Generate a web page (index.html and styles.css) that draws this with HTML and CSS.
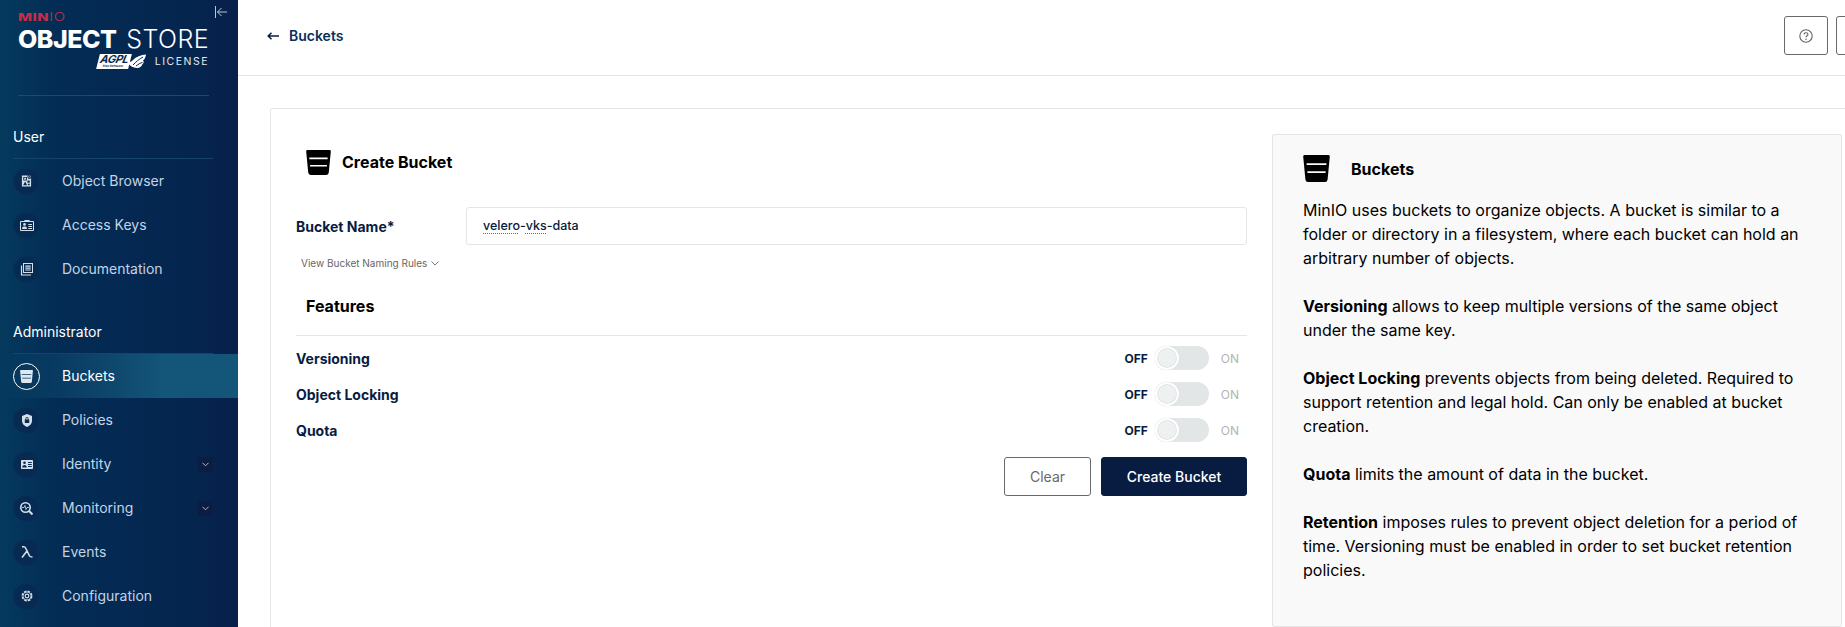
FILE: index.html
```html
<!DOCTYPE html>
<html lang="en">
<head>
<meta charset="utf-8">
<title>MinIO Console - Create Bucket</title>
<link rel="stylesheet" href="styles.css">
</head>
<body>
<svg class="defs" width="0" height="0" aria-hidden="true">
  <symbol id="bucket" viewBox="0 0 27 27">
    <path fill-rule="evenodd" d="M1.5 0H25.5Q27 0 26.8 1.6L24.6 24.4Q24.3 27 22 27H5Q2.7 27 2.4 24.4L.2 1.6Q0 0 1.5 0ZM3.6 8.2V9.9H23.4V8.2ZM4.4 16.2V17.9H22.6V16.2Z"/>
  </symbol>
</svg>
<div class="app">
  <aside class="sidebar">
    <button class="collapse" aria-label="Collapse">
      <svg viewBox="0 0 12 12" width="12" height="12"><path d="M.5 0V12M12 6H2.5M6.5 2L2.5 6L6.5 10" fill="none" stroke="#b9c6d4" stroke-width="1"/></svg>
    </button>
    <div class="logo">
      <div class="logo-brand">MIN<span class="logo-io">IO</span></div>
      <div class="logo-product"><b>OBJECT</b><span>STORE</span></div>
      <div class="logo-license">
        <div class="agpl">
          <span class="agpl-tag"><i>AGPL</i><small>Free Software</small></span>
          <svg class="agpl-wing" viewBox="0 0 19 16" width="19" height="16"><path d="M0 8C2 11 6 14 10 14C13 14 15 12 15.500 10C17 9 17 7.500 16 6.500C18 5 18.500 3 19 .5C14 1 9 2.500 6 6C4 8 2 8.500 0 8Z" fill="#fff"/><path d="M6 11C9 8 12 5 16 3M9 12C11 10.500 13 9 15.500 8.500" stroke="#0a2a4e" stroke-width="1" fill="none"/></svg>
        </div>
        <span class="logo-word">LICENSE</span>
      </div>
    </div>

    <nav class="nav">
      <h3 class="nav-title">User</h3>
      <a class="nav-item">
        <span class="nav-icon"><svg viewBox="0 0 12 12" width="11" height="12"><path fill-rule="evenodd" d="M1 0H7.500A2 2 0 0 0 11 2.800V12H1ZM2.500 1.500V5.500H6.500V1.500ZM3.500 2.500H5.500V4.500H3.500ZM7 5.500V8H9.500V5.500ZM4.500 6.500L2.300 10.500H6.700ZM7.500 9V10.500H9.500V9Z" fill="#d5dfea"/><circle cx="9.300" cy="1.300" r="1.100" fill="none" stroke="#d5dfea" stroke-width=".6"/></svg></span>
        <span class="nav-label">Object Browser</span>
      </a>
      <a class="nav-item">
        <span class="nav-icon"><svg viewBox="0 0 14 12" width="14" height="12"><path fill-rule="evenodd" d="M1 2H4.500V1H9.500V2H13Q14 2 14 3V11Q14 12 13 12H1Q0 12 0 11V3Q0 2 1 2ZM1 3V11H13V3ZM4.500 4A1.400 1.400 0 1 1 4.500 6.800A1.400 1.400 0 1 1 4.500 4ZM2 10C2 8 3 7.500 4.500 7.500S7 8 7 10ZM8.300 5H12V6H8.300ZM8.300 7H12V8H8.300ZM8.300 9H12V10H8.300Z" fill="#d5dfea"/></svg></span>
        <span class="nav-label">Access Keys</span>
      </a>
      <a class="nav-item">
        <span class="nav-icon"><svg viewBox="0 0 13 13" width="13" height="13"><path fill-rule="evenodd" d="M3 0H13V10H3ZM4 1V9H12V1ZM5.300 2.500H10.700V3.700H5.300ZM5.300 4.500H10.700V5.700H5.300ZM5.300 6.500H10.700V7.500H5.300Z" fill="#d5dfea"/><path d="M1.500 2.500V12H11" fill="none" stroke="#d5dfea" stroke-width="1.200"/></svg></span>
        <span class="nav-label">Documentation</span>
      </a>

      <h3 class="nav-title nav-title-admin">Administrator</h3>
      <a class="nav-item is-active">
        <span class="nav-icon"><svg class="fill-light" width="13" height="13"><use href="#bucket"/></svg></span>
        <span class="nav-label">Buckets</span>
      </a>
      <a class="nav-item">
        <span class="nav-icon"><svg viewBox="0 0 12 13" width="12" height="13"><path fill-rule="evenodd" d="M6 0L11 2V7C11 10 8.500 12 6 13C3.500 12 1 10 1 7V2ZM3.800 5.500V9H8.200V5.500H7.500V4.500A1.500 1.500 0 0 0 4.500 4.500V5.500ZM5.300 5.500V4.500A.7.7 0 0 1 6.700 4.500V5.500Z" fill="#d5dfea"/></svg></span>
        <span class="nav-label">Policies</span>
      </a>
      <a class="nav-item">
        <span class="nav-icon"><svg viewBox="0 0 12 9" width="12" height="9"><path fill-rule="evenodd" d="M.8 0H11.200Q12 0 12 .8V8.200Q12 9 11.200 9H.8Q0 9 0 8.200V.8Q0 0 .8 0ZM3.500 1.500A1.300 1.300 0 1 0 3.500 4.100A1.300 1.300 0 1 0 3.500 1.500ZM1.300 7.500H5.700C5.700 5.500 4.700 4.900 3.500 4.900S1.300 5.500 1.300 7.500ZM7 2V3H10.800V2ZM7 4V5H10.800V4ZM7 6V7H10.800V6Z" fill="#d5dfea"/></svg></span>
        <span class="nav-label">Identity</span>
        <span class="nav-chevron"><svg viewBox="0 0 8 5" width="7" height="5"><path d="M.5 .5L4 4L7.500 .5" fill="none" stroke="#c3cfdc" stroke-width="1"/></svg></span>
      </a>
      <a class="nav-item">
        <span class="nav-icon"><svg viewBox="0 0 13 13" width="13" height="13"><circle cx="5.500" cy="5.500" r="4.700" fill="none" stroke="#d5dfea" stroke-width="1.600"/><path d="M2 5.500H4L5 3.500L6 7.500L7 5.500H9" fill="none" stroke="#d5dfea" stroke-width=".8"/><path d="M9 9L12.500 12.500" stroke="#d5dfea" stroke-width="2"/></svg></span>
        <span class="nav-label">Monitoring</span>
        <span class="nav-chevron"><svg viewBox="0 0 8 5" width="7" height="5"><path d="M.5 .5L4 4L7.500 .5" fill="none" stroke="#c3cfdc" stroke-width="1"/></svg></span>
      </a>
      <a class="nav-item">
        <span class="nav-icon"><svg viewBox="0 0 12 12" width="12" height="12"><path d="M1 .8H2.800C4 .8 4.500 1.500 5 2.800L8.500 10C8.800 10.700 9.300 11 11.500 11M6 5L1 11.500" fill="none" stroke="#d5dfea" stroke-width="1.600"/></svg></span>
        <span class="nav-label">Events</span>
      </a>
      <a class="nav-item">
        <span class="nav-icon"><svg viewBox="0 0 12 12" width="12" height="12"><circle cx="6" cy="6" r="4.800" fill="none" stroke="#d5dfea" stroke-width="1.300" stroke-dasharray="2.600 1.170"/><circle cx="6" cy="6" r="4" fill="none" stroke="#d5dfea" stroke-width=".8"/><circle cx="6" cy="6" r="1.800" fill="none" stroke="#d5dfea" stroke-width="1.200"/></svg></span>
        <span class="nav-label">Configuration</span>
      </a>
    </nav>
  </aside>

  <main class="main">
    <header class="topbar">
      <a class="back">
        <svg viewBox="0 0 12 8" width="12" height="8"><path d="M12 4H1.500M4.500 .7L1.200 4L4.500 7.300" fill="none" stroke="#081c42" stroke-width="1.500"/></svg>
        <span>Buckets</span>
      </a>
      <div class="top-actions">
        <button class="icon-btn" aria-label="Help">
          <svg viewBox="0 0 14 14" width="14" height="14"><circle cx="7" cy="7" r="6.200" fill="none" stroke="#5f6368" stroke-width="1.100"/><path d="M5 5.600C5 4.300 6 3.700 7 3.700S9 4.300 9 5.400C9 6.800 7 6.800 7 8.300" fill="none" stroke="#5f6368" stroke-width="1.100"/><circle cx="7" cy="10.200" r=".8" fill="#5f6368"/></svg>
        </button>
        <button class="icon-btn" aria-label="More"></button>
      </div>
    </header>

    <section class="panel">
      <form class="form">
        <h2 class="form-title">
          <svg class="fill-black title-icon" width="25" height="25"><use href="#bucket"/></svg>
          <span>Create Bucket</span>
        </h2>
        <div class="field">
          <label class="field-label">Bucket Name*</label>
          <div class="input"><span class="misspelt">velero</span>-<span class="misspelt">vks</span>-data</div>
        </div>
        <a class="rules">View Bucket Naming Rules
          <svg viewBox="0 0 8 5" width="8" height="5"><path d="M.5 .5L4 4L7.500 .5" fill="none" stroke="#666" stroke-width=".9"/></svg>
        </a>
        <h3 class="features">Features</h3>
        <div class="toggle-list">
          <div class="toggle-row">
            <span class="toggle-label">Versioning</span>
            <span class="off">OFF</span><span class="switch"><span class="knob"></span></span><span class="on">ON</span>
          </div>
          <div class="toggle-row">
            <span class="toggle-label">Object Locking</span>
            <span class="off">OFF</span><span class="switch"><span class="knob"></span></span><span class="on">ON</span>
          </div>
          <div class="toggle-row">
            <span class="toggle-label">Quota</span>
            <span class="off">OFF</span><span class="switch"><span class="knob"></span></span><span class="on">ON</span>
          </div>
        </div>
        <div class="actions">
          <button type="button" class="btn btn-clear">Clear</button>
          <button type="button" class="btn btn-primary">Create Bucket</button>
        </div>
      </form>

      <aside class="help">
        <h3 class="help-title">
          <svg class="fill-black" width="27" height="27"><use href="#bucket"/></svg>
          <span>Buckets</span>
        </h3>
        <p>MinIO uses buckets to organize objects. A bucket is similar to a folder or directory in a filesystem, where each bucket can hold an arbitrary number of objects.</p>
        <p><b>Versioning</b> allows to keep multiple versions of the same object under the same key.</p>
        <p><b>Object Locking</b> prevents objects from being deleted. Required to support retention and legal hold. Can only be enabled at bucket creation.</p>
        <p><b>Quota</b> limits the amount of data in the bucket.</p>
        <p><b>Retention</b> imposes rules to prevent object deletion for a period of time. Versioning must be enabled in order to set bucket retention policies.</p>
      </aside>
    </section>
  </main>
</div>
</body>
</html>
```

FILE: styles.css
```css
* { box-sizing: border-box; }
html, body { margin: 0; height: 627px; overflow: hidden; background: #fff; }
body { font-family: Inter, "Noto Sans", sans-serif; font-size: 14px; color: #000; }
.defs { display: block; height: 0; }
h2, h3, p { margin: 0; }

.app { display: flex; width: 1888px; height: 627px; overflow: hidden; }

/* sidebar */
.sidebar { position: relative; flex: 0 0 238px; height: 627px; overflow: hidden; background: linear-gradient(90deg, #053a5e 0%, #032d55 21%, #05244e 85%, #08204a 100%); color: #fff; }
.collapse { position: absolute; top: 6px; left: 215px; width: 12px; height: 12px; padding: 0; border: 0; background: none; }
.collapse svg { display: block; }

.logo { height: 96px; margin: 0 29px 0 18px; padding-top: 13px; border-bottom: 1px solid #1b4a70; }
.logo-brand { width: 38px; height: 9px; font-size: 11px; line-height: 9px; font-weight: 800; letter-spacing: .4px; color: #c72c48; transform: scaleX(1.350); transform-origin: left center; }
.logo-io { font-weight: 300; }
.logo-product { display: flex; justify-content: space-between; margin-top: 5px; height: 24px; font-size: 25px; line-height: 24px; white-space: nowrap; }
.logo-product b { font-weight: 800; letter-spacing: -.5px; }
.logo-product span { font-weight: 300; letter-spacing: .4px; }
.logo-license { display: flex; justify-content: flex-end; align-items: center; gap: 9px; margin-top: 2px; height: 17px; }
.agpl { display: flex; align-items: center; }
.agpl-tag { display: flex; flex-direction: column; align-items: center; width: 32px; height: 15px; background: #fff; color: #0a2a4e; transform: skewX(-14deg); }
.agpl-tag i { font-size: 11px; line-height: 11px; font-weight: 700; letter-spacing: -.3px; }
.agpl-tag small { font-size: 3px; line-height: 3px; font-weight: 700; white-space: nowrap; }
.agpl-wing { margin-left: -3px; }
.logo-word { font-size: 10.500px; letter-spacing: 1.500px; font-weight: 400; color: #e4eaf0; }

.nav { padding-top: 30px; }
.nav-title { height: 33px; margin: 0 25px 0 13px; border-bottom: 1px solid #164469; font-size: 14px; line-height: 21px; font-weight: 400; color: #fff; }
.nav-title-admin { margin-top: 30px; }
.nav-item { display: flex; align-items: center; height: 44px; padding: 0 25px 0 13px; color: #c2d4e6; }
.nav-icon { display: flex; flex: 0 0 27px; align-items: center; justify-content: center; width: 27px; height: 27px; border: 1px solid #08305a; border-radius: 50%; background: #062a52; }
.nav-label { flex: 1; margin-left: 22px; font-size: 14px; line-height: 20px; }
.nav-chevron { display: flex; align-items: center; justify-content: center; width: 15px; height: 15px; border-radius: 2px; background: #0b1d42; }
.is-active { background: linear-gradient(90deg, rgba(21,87,122,0) 0%, #14567a 70%, #14567a 100%); color: #fff; }
.is-active .nav-icon { border-color: #fff; background: none; }
.fill-light { fill: #dfe6ee; }
.fill-black { fill: #000; }

/* main */
.main { flex: 1; min-width: 0; }
.topbar { display: flex; align-items: center; justify-content: space-between; height: 76px; padding: 0 8px 4px 29px; border-bottom: 1px solid #e5e5e5; }
.back { display: flex; align-items: center; gap: 10px; font-size: 14px; font-weight: 600; color: #07305a; }
.top-actions { display: flex; gap: 8px; }
.icon-btn { display: flex; align-items: center; justify-content: center; width: 44px; height: 39px; padding: 0; border: 1px solid #696969; border-radius: 3px; background: #fff; }

.panel { display: flex; margin: 32px 0 0 32px; height: 560px; padding: 25px 0 0 25px; border: 1px solid #e5e5e5; border-radius: 2px; }
.form { flex: 0 0 951px; }
.form-title { display: flex; align-items: center; gap: 11px; height: 25px; margin: 16px 0 0 10px; font-size: 16px; line-height: 25px; font-weight: 700; }
.title-icon { flex: none; }
.field { display: flex; align-items: center; margin-top: 32px; }
.field-label { flex: 0 0 170px; font-size: 14px; font-weight: 700; color: #081c42; }
.input { flex: 1; height: 38px; padding: 0 16px; border: 1px solid #e5e5e5; border-radius: 3px; font-size: 12.500px; line-height: 36px; font-weight: 500; color: #07193e; }
.misspelt { text-decoration: underline dotted #e4343c 1px; text-underline-offset: 3px; }
.rules { display: flex; width: fit-content; align-items: center; gap: 4px; margin: 11px 0 0 5px; font-size: 10px; line-height: 14px; color: #666; }
.features { width: fit-content; height: 20px; margin: 26px 0 0 10px; font-size: 16px; line-height: 20px; font-weight: 700; }
.toggle-list { margin-top: 19px; padding-top: 4px; border-top: 1px solid #e5e5e5; }
.toggle-row { display: flex; align-items: center; height: 36px; padding-right: 8px; }
.toggle-label { margin-right: auto; font-size: 14px; font-weight: 700; color: #081c42; }
.off { font-size: 12px; font-weight: 700; color: #081c42; }
.on { margin-left: 12px; font-size: 12px; color: #b4b4b4; }
.switch { display: flex; align-items: center; width: 54px; height: 24px; margin-left: 7px; border-radius: 12px; background: #e3e6e6; }
.knob { width: 24px; height: 24px; border: 2px solid #fff; border-radius: 50%; background: #eef1f2; box-shadow: 0 0 0 1px #e2e2e2 inset, 0 0 1px #ccc; }
.actions { display: flex; justify-content: flex-end; gap: 10px; margin-top: 9px; }
.btn { height: 39px; padding: 0; border-radius: 3px; font-family: inherit; font-size: 14px; }
.btn-clear { width: 87px; border: 1px solid #696969; background: #fff; color: #696969; }
.btn-primary { width: 146px; border: 1px solid #081c42; background: #081c42; color: #fff; font-weight: 500; }

.help { flex: 0 0 570px; height: 493px; margin-left: 25px; padding: 20px 24px 0 30px; border: 1px solid #e5e5e5; border-radius: 2px; background: #f9f9f9; font-size: 16px; line-height: 24px; color: #000; }
.help-title { display: flex; align-items: center; gap: 21px; height: 27px; margin-bottom: 16px; font-size: 16px; font-weight: 700; }
.help p { margin-bottom: 24px; }
.help b { font-weight: 700; }
```
